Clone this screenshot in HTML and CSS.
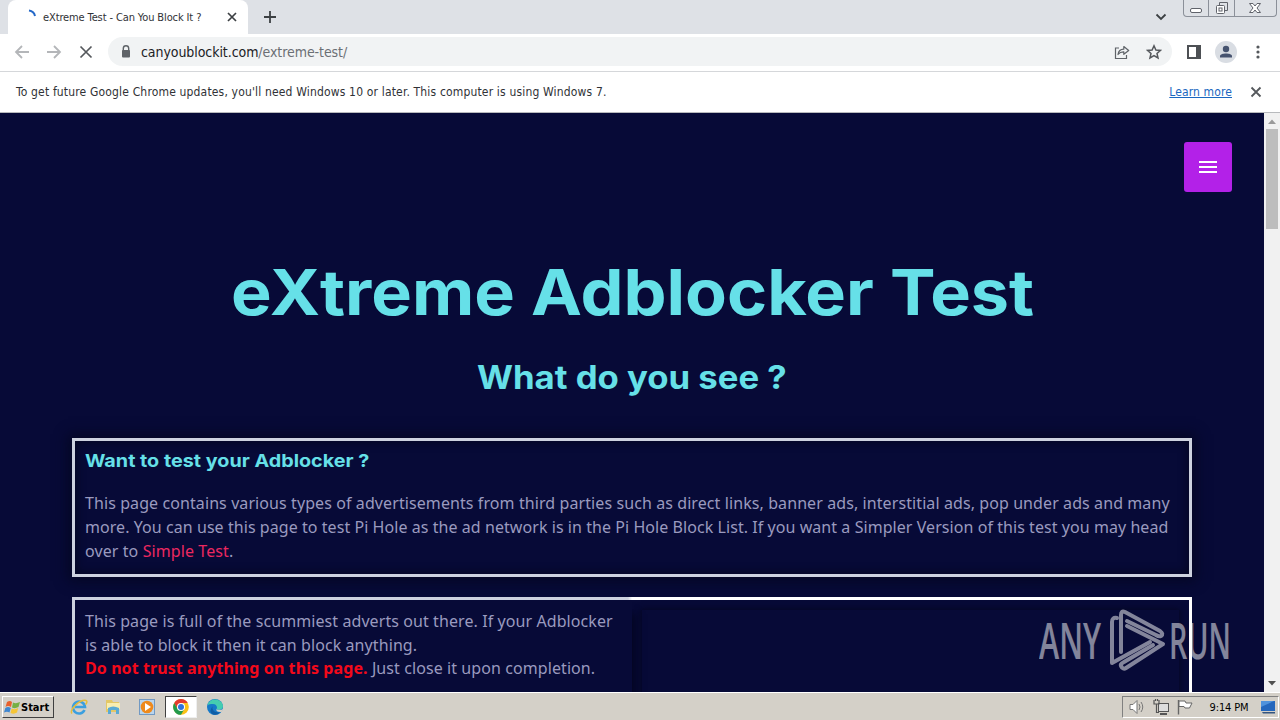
FILE: index.html
```html
<!DOCTYPE html>
<html lang="en">
<head>
    <meta charset="UTF-8">
    <meta name="viewport" content="width=device-width, initial-scale=1.0">
    <title>eXtreme Test - Can You Block It ?</title>
    <link rel="stylesheet" href="styles.css">
</head>
<body>

    <div class="tab-strip">
        <div class="tab">
            <svg class="spinner" width="16" height="16" viewBox="0 0 16 16"><path d="M8 1.500A7 7 0 0 1 14 7" fill="none" stroke="#2468c8" stroke-width="2"/></svg>
            <span class="tab-title">eXtreme Test - Can You Block It ?</span>
            <svg class="tab-close" width="10" height="10" viewBox="0 0 10 10"><path d="M1 1L9 9M9 1L1 9" stroke="#3c4043" stroke-width="1.7"/></svg>
        </div>
        <svg class="new-tab" width="14" height="14" viewBox="0 0 14 14"><path d="M7 1V13M1 7H13" stroke="#3c4043" stroke-width="1.8"/></svg>
        <svg class="tab-search" width="12" height="8" viewBox="0 0 12 8"><path d="M1.5 1.5L6 6L10.5 1.5" fill="none" stroke="#3c4043" stroke-width="1.8"/></svg>
        <div class="window-buttons">
            <span><svg width="14" height="14" viewBox="0 0 14 14"><rect x="1.500" y="7.500" width="11" height="4" rx="1.500" fill="#fff" stroke="#60636b"/></svg></span>
            <span><svg width="14" height="14" viewBox="0 0 14 14"><path d="M4.500 4V1.500H12.500V9.500H10" fill="none" stroke="#60636b"/><rect x="1.500" y="4.500" width="8" height="8" rx="1" fill="#fff" stroke="#60636b"/><rect x="4" y="7" width="3" height="3" fill="none" stroke="#60636b"/></svg></span>
            <span class="wide"><svg width="14" height="12" viewBox="0 0 14 12"><path d="M1.500 1.500H5L7 4L9 1.500H12.500L9 6L12.500 10.500H9L7 8L5 10.500H1.500L5 6Z" fill="#fff" stroke="#60636b"/></svg></span>
        </div>
    </div>

    <div class="toolbar">
        <svg width="16" height="16" viewBox="0 0 16 16"><path d="M15 8H2M8 2L2 8L8 14" fill="none" stroke="#b4b6b9" stroke-width="1.8"/></svg>
        <svg width="16" height="16" viewBox="0 0 16 16"><path d="M1 8H14M8 2L14 8L8 14" fill="none" stroke="#b4b6b9" stroke-width="1.8"/></svg>
        <svg width="16" height="16" viewBox="0 0 16 16"><path d="M2.500 2.500L13.500 13.500M13.500 2.500L2.500 13.500" stroke="#55585c" stroke-width="1.7"/></svg>
        <div class="address">
            <svg class="lock" width="10" height="13" viewBox="0 0 10 13"><path d="M2.300 6V3.500A2.700 2.700 0 0 1 7.700 3.500V6" fill="none" stroke="#5f6368" stroke-width="1.400"/><rect x="1" y="5" width="8" height="7.500" rx="1" fill="#5f6368"/></svg>
            <span class="url">canyoublockit.com<span>/extreme-test/</span></span>
            <svg class="share" width="16" height="16" viewBox="0 0 16 16"><path d="M5 4H1.500V14.500H12.500V11" fill="none" stroke="#5f6368" stroke-width="1.200"/><path d="M4 10.500C4.500 7 6.500 5.300 9.800 5.200V2.500L14.700 6.500L9.800 10.300V7.800C7.300 7.700 5.500 8.500 4 10.500Z" fill="none" stroke="#5f6368" stroke-width="1.200" stroke-linejoin="round"/></svg>
            <svg width="16" height="16" viewBox="0 0 16 16"><path d="M8 1.800L9.900 6L14.400 6.400L11 9.400L12 13.900L8 11.500L4 13.900L5 9.400L1.600 6.400L6.100 6Z" fill="none" stroke="#55585c" stroke-width="1.500"/></svg>
        </div>
        <svg class="panel" width="14" height="14" viewBox="0 0 14 14"><rect x="1" y="1" width="12" height="12" fill="none" stroke="#4d5054" stroke-width="2"/><rect x="9" y="1" width="4" height="12" fill="#4d5054"/></svg>
        <svg class="avatar" width="22" height="22" viewBox="0 0 22 22"><circle cx="11" cy="11" r="11" fill="#d9dde3"/><circle cx="11" cy="8" r="3.200" fill="#46536f"/><path d="M5 16.500V15C5 11.500 17 11.500 17 15V16.500Z" fill="#46536f"/></svg>
        <svg class="dots" width="4" height="14" viewBox="0 0 4 14"><g fill="#55585c"><circle cx="2" cy="2" r="1.600"/><circle cx="2" cy="7" r="1.600"/><circle cx="2" cy="12" r="1.600"/></g></svg>
    </div>

    <div class="infobar">
        <span class="info-text">To get future Google Chrome updates, you'll need Windows 10 or later. This computer is using Windows 7.</span>
        <a href="#">Learn more</a>
        <svg width="12" height="12" viewBox="0 0 12 12"><path d="M1.500 1.500L10.500 10.500M10.500 1.500L1.500 10.500" stroke="#55585c" stroke-width="1.8"/></svg>
    </div>

    <div class="viewport">
        <div class="page">
            <header>
                <button class="menu-btn"><i></i><i></i><i></i></button>
            </header>

            <h1><span>eXtreme Adblocker Test</span></h1>
            <h2><span>What do you see ?</span></h2>

            <div class="box">
                <h3><span>Want to test your Adblocker ?</span></h3>
                <p class="intro">
                    <span class="l1">This page contains various types of advertisements from third parties such as direct links, banner ads, interstitial ads, pop under ads and many</span><br>
                    <span class="l2">more. You can use this page to test Pi Hole as the ad network is in the Pi Hole Block List. If you want a Simpler Version of this test you may head</span><br>
                    <span class="l1">over to <a href="#">Simple Test</a>.</span>
                </p>
            </div>

            <div class="box columns">
                <div class="warning">
                    This page is full of the scummiest adverts out there. If your Adblocker<br>
                    is able to block it then it can block anything.<br>
                    <strong>Do not trust anything on this page.</strong> Just close it upon completion.
                </div>
                <div class="ad-slot"></div>
            </div>
        </div>

        <div class="scrollbar">
            <svg width="16" height="16" viewBox="0 0 16 16"><path d="M4 11L8 6.500L12 11Z" fill="#9a9a9a"/></svg>
            <div class="thumb"></div>
            <svg class="down" width="16" height="16" viewBox="0 0 16 16"><path d="M4 5L8 9.500L12 5Z" fill="#505050"/></svg>
        </div>

        <div class="watermark">
            <svg width="200" height="88" viewBox="-3 -12 200 88">
                <text x="1" y="51" textLength="62" lengthAdjust="spacingAndGlyphs">ANY</text>
                <g fill="none" stroke="#fff" stroke-width="4" stroke-linejoin="round" stroke-linecap="round">
                    <path d="M79 10Q74 9 74 14V55L112 34"/>
                    <path d="M83 44V7Q83 2 87 4L122 23Q126 26 123 28Q121 29 118 27L89 13"/>
                    <path d="M89 18L125 36L88 60Q85 62 83 58Q82 56 86 54L115 37"/>
                </g>
                <text x="131" y="51" textLength="62" lengthAdjust="spacingAndGlyphs">RUN</text>
            </svg>
        </div>
    </div>

    <div class="taskbar">
        <div class="start">
            <svg width="17" height="16" viewBox="0 0 17 16"><path d="M3 3Q6 1 8 3L7 8Q4 6 1.500 8Z" fill="#e8602c"/><path d="M9 3.500Q12 5 16 3L14.500 8Q11 10 8 8.500Z" fill="#76b043"/><path d="M1.300 9Q4 7 6.800 9L5.500 13.500Q3 12 0 13.500Z" fill="#3f87d0"/><path d="M7.700 9.500Q11 11 14.200 9L13 13.500Q10 15.500 6.500 14Z" fill="#f5c535"/></svg>
            <b>Start</b>
        </div>
        <div class="task"><svg width="18" height="18" viewBox="0 0 18 18"><path d="M14.500 12A6 6 0 1 1 15 9H5" fill="none" stroke="#3b9fdf" stroke-width="2.600"/><path d="M2 15.500C-1 12 10 1 16 2.500C17.500 3 17 5 15.500 6.500" fill="none" stroke="#e5bd3a" stroke-width="1.500"/></svg></div>
        <div class="task"><svg width="18" height="18" viewBox="0 0 18 18"><path d="M2 2H8L9 4H15V14H2Z" fill="#e3c766"/><path d="M3 5H16V11H3Z" fill="#f8edb0"/><path d="M4 16V10Q9 7 15 10V16H12V12H7V16Z" fill="#5aaad4"/></svg></div>
        <div class="task"><svg width="18" height="18" viewBox="0 0 18 18"><rect x="1.500" y="1.500" width="15" height="15" fill="#b9d5ee" stroke="#7199c3"/><circle cx="9" cy="9" r="6.300" fill="#ee8a1d"/><path d="M7 5L13 9L7 13Z" fill="#fff"/></svg></div>
        <div class="task active"><svg width="18" height="18" viewBox="0 0 18 18"><circle cx="9" cy="9" r="7.800" fill="#fbc116"/><path d="M2.200 5.100A7.800 7.800 0 0 1 15.800 5.100H9L5.600 11Z" fill="#e33b2e"/><path d="M2.200 5.100A7.800 7.800 0 0 0 9 16.800L12.400 11L9 12.500L5.600 11Z" fill="#229a4c"/><circle cx="9" cy="9" r="4" fill="#fff"/><circle cx="9" cy="9" r="3" fill="#2f73dc"/></svg></div>
        <div class="task"><svg width="18" height="18" viewBox="0 0 18 18"><circle cx="9" cy="9" r="8" fill="#1679c8"/><path d="M1.500 7C4 -1 16 0 17 8C17 12 12 12.500 10.500 11C12 9 10 6 7 6C4.500 6 2.500 6.500 1.500 7Z" fill="#45cdb0"/><path d="M7 8C5 11 8 15 14 14.500Q11 17.500 7 16.500Q2 13 7 8Z" fill="#105da5"/><path d="M10.500 11Q12.500 12.700 17.500 11L15.500 14Q9.500 14.500 10.500 11Z" fill="#d4d0c8"/></svg></div>
        <div class="tray">
            <svg width="18" height="18" viewBox="0 0 18 18"><path d="M2 6.500H5L9 2.500V15.500L5 11.500H2Z" fill="#fff" stroke="#777"/><path d="M11 6Q13 9 11 12M13 4Q16.500 9 13 14" fill="none" stroke="#777"/></svg>
            <svg width="18" height="18" viewBox="0 0 18 18"><rect x="6.500" y="5.500" width="10" height="8" fill="#ddd" stroke="#555"/><path d="M8 16H15" stroke="#555" stroke-width="2"/><path d="M2 2V6H7V2M4.500 6V14.500H7M3.500 1V3M5.500 1V3" fill="none" stroke="#555" stroke-width="1.200"/></svg>
            <svg width="18" height="18" viewBox="0 0 18 18"><path d="M2.500 2V16.500" stroke="#666" stroke-width="1.400"/><path d="M3 3H9L10 5H16L13.500 10H9L8 8.500H3Z" fill="#fff" stroke="#666"/></svg>
            <span class="clock">9:14 PM</span>
            <svg width="16" height="16" viewBox="0 0 16 16"><path d="M1 2H15V12H1Z" fill="#2467bd"/><path d="M1 2H14L1 8Z" fill="#4f92dc"/><path d="M2 13H15V14.500H3Z" fill="#34557f"/></svg>
        </div>
    </div>

</body>
</html>
```

FILE: styles.css
```css
* {
    box-sizing: border-box;
}

body {
    display: flex;
    flex-direction: column;
    width: 1280px;
    height: 720px;
    margin: 0;
    overflow: hidden;
    font-family: "DejaVu Sans Condensed", "DejaVu Sans", sans-serif;
    font-size: 12px;
    color: #303236;
}

svg {
    display: block;
    flex-shrink: 0;
}

.tab-strip {
    display: flex;
    height: 34px;
    background-color: #dee1e6;
    padding-left: 8px;
}

.tab {
    display: flex;
    align-items: center;
    width: 240px;
    padding: 0 11px 0 13px;
    background-color: #fff;
    border-radius: 8px 8px 0 0;
}

.tab-title {
    flex: 1;
    margin-left: 6px;
    font-size: 11px;
    letter-spacing: -0.12px;
    white-space: nowrap;
}

.new-tab {
    margin: 10px 0 0 15px;
}

.tab-search {
    margin: 13px 16px 0 auto;
}

.window-buttons {
    display: flex;
    width: 94px;
    height: 17px;
    margin-right: 3px;
    border: 1px solid #8b9099;
    border-top: none;
    border-radius: 0 0 4px 4px;
}

.window-buttons span {
    display: flex;
    flex: 25;
    align-items: center;
    justify-content: center;
    border-right: 1px solid #8b9099;
}

.window-buttons .wide {
    flex: 42;
    border-right: none;
}

.toolbar {
    display: flex;
    align-items: center;
    gap: 16px;
    height: 38px;
    padding: 0 20px 2px 14px;
    background-color: #fff;
    border-bottom: 1px solid #d5d7da;
}

.address {
    display: flex;
    flex: 1;
    align-items: center;
    gap: 16px;
    height: 29px;
    margin-left: -2px;
    padding: 0 10px 0 13px;
    background-color: #f1f3f4;
    border-radius: 15px;
}

.url {
    flex: 1;
    margin-left: -6px;
    font-size: 14px;
    letter-spacing: -0.07px;
    color: #202124;
}

.url span {
    color: #6b6f74;
}

.panel {
    margin-left: -1px;
}

.avatar {
    margin-left: -2px;
}

.dots {
    margin-left: 3px;
}

.infobar {
    display: flex;
    align-items: center;
    height: 41px;
    padding: 0 18px 0 16px;
    background-color: #fff;
    border-bottom: 1px solid #b8babd;
}

.info-text {
    flex: 1;
    letter-spacing: 0.165px;
    white-space: nowrap;
}

.infobar a {
    margin-right: 18px;
    letter-spacing: 0.12px;
    color: #1a67c0;
}

.viewport {
    display: flex;
    position: relative;
    height: 579px;
}

.page {
    width: 1264px;
    padding: 0 72px;
    overflow: hidden;
    background-color: #070a37;
    color: #9a9abf;
    font-family: "Noto Sans", sans-serif;
    font-size: 16px;
    line-height: 24px;
}

header {
    display: flex;
    justify-content: flex-end;
    height: 141px;
    margin-right: -40px;
    padding-top: 29px;
}

.menu-btn {
    display: flex;
    flex-direction: column;
    align-items: center;
    justify-content: center;
    gap: 3px;
    width: 48px;
    height: 50px;
    background-color: #b321e8;
    border: none;
    border-radius: 3px;
}

.menu-btn i {
    width: 18px;
    height: 2px;
    background-color: #fff;
}

h1, h2, h3 {
    margin: 0;
    font-family: Inter, sans-serif;
    font-weight: 700;
    color: #66e0e8;
    text-align: center;
    white-space: nowrap;
}

/* widen the headings */
h1 span, h2 span, h3 span {
    display: inline-block;
    transform: scaleX(1.084);
}

h1 {
    font-size: 63px;
    line-height: 77px;
}

h2 {
    margin-top: 26px;
    font-size: 32px;
    line-height: 42px;
}

h3 {
    font-size: 18px;
    line-height: 24px;
    text-align: left;
}

h3 span {
    transform: scaleX(1.098);
    transform-origin: left;
}

.box {
    height: 139px;
    margin-top: 39px;
    padding: 8px 10px;
    border: 3px solid #cdd2df;
    box-shadow: 0 0 12px 4px #050724, inset 0 0 8px 2px #050724;
}

.intro {
    margin: 18px 0 0;
    white-space: nowrap;
}

.intro .l1 {
    letter-spacing: 0.09px;
}

.intro .l2 {
    letter-spacing: 0.06px;
}

.intro a {
    color: #ec2860;
    text-decoration: none;
}

.columns {
    display: flex;
    height: 200px;
    margin-top: 20px;
    padding: 0;
    border-image: linear-gradient(to right, #cdd2df 556px, #fff 560px) 3;
    box-shadow: none;
}

.warning {
    width: 557px;
    padding: 10px;
    line-height: 23.5px;
    letter-spacing: 0.085px;
    white-space: nowrap;
    box-shadow: 8px 10px 8px -4px #050724;
}

.warning strong {
    color: #f3091a;
}

.ad-slot {
    flex: 1;
    margin: 10px 10px 0;
    box-shadow: 0 0 6px 1px #050724;
}

.scrollbar {
    display: flex;
    flex-direction: column;
    align-items: center;
    width: 16px;
    background-color: #f1f1f1;
}

.thumb {
    width: 12px;
    height: 100px;
    background-color: #bdbdbd;
}

.down {
    margin-top: auto;
}

.watermark {
    position: absolute;
    left: 1035px;
    top: 483px;
    opacity: 0.5;
}

.watermark text {
    font-family: "Open Sans", sans-serif;
    font-size: 51px;
    font-weight: 600;
    fill: #fff;
}

.taskbar {
    display: flex;
    align-items: center;
    height: 28px;
    padding: 1px 1px 0 2px;
    background-color: #d4d0c8;
    border-top: 1px solid #fff;
    color: #000;
}

.start {
    display: flex;
    align-items: center;
    width: 52px;
    height: 22px;
    margin-right: 9px;
    padding-left: 1px;
    border: 1px solid #fff;
    border-right-color: #404040;
    border-bottom-color: #404040;
}

.start b {
    font-size: 11px;
}

.task {
    display: flex;
    align-items: center;
    justify-content: center;
    width: 32px;
    height: 22px;
    margin-right: 2px;
}

.task.active {
    background-color: #fff;
    border: 1px solid #404040;
    border-right-color: #eee;
    border-bottom-color: #eee;
}

.tray {
    display: flex;
    align-items: center;
    gap: 6px;
    width: 157px;
    height: 22px;
    margin-left: auto;
    padding: 0 2px 0 5px;
    border: 1px solid #808080;
    border-right-color: #fff;
    border-bottom-color: #fff;
}

.clock {
    flex: 1;
    padding-left: 4px;
    text-align: center;
    font-size: 11px;
    letter-spacing: -0.15px;
    white-space: nowrap;
}
```
